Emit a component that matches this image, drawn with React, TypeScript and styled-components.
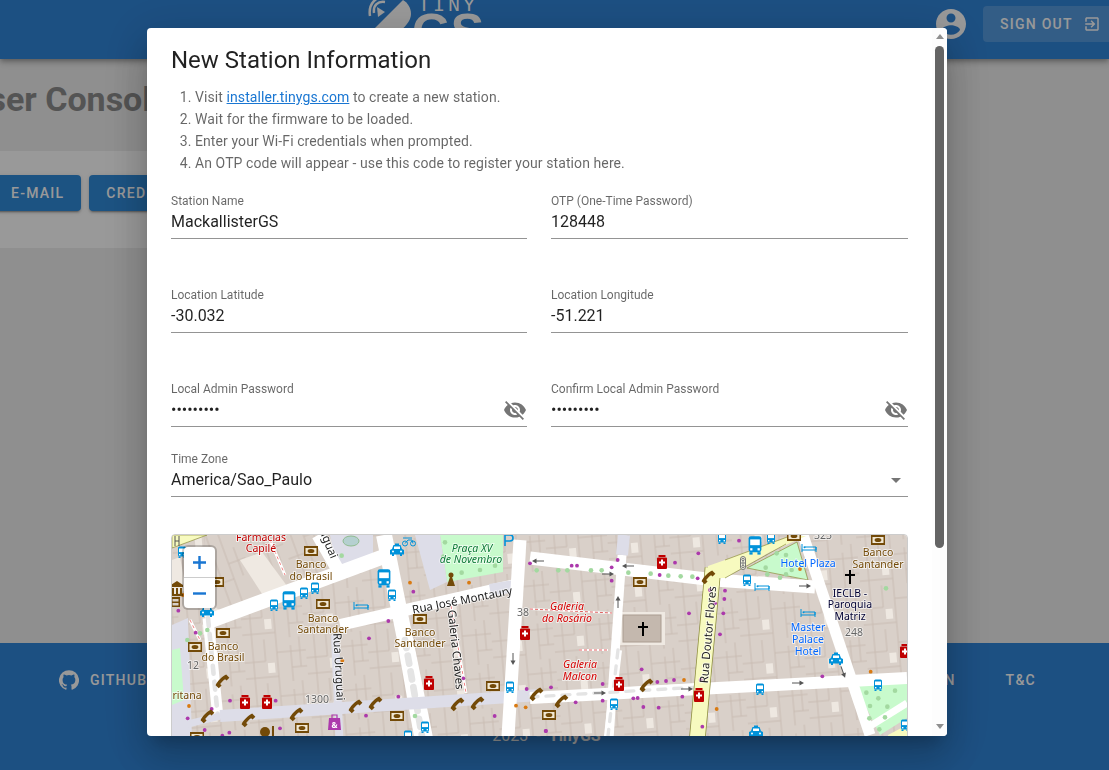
import React from "react";
import styled, { createGlobalStyle } from "styled-components";

const Global = createGlobalStyle`
  html, body { margin: 0; padding: 0; height: 100%; overflow: hidden; }
  body { font-family: Roboto, "Liberation Sans", sans-serif; background: #eeeeee; }
  * { box-sizing: border-box; }
`;

const Page = styled.div`
  width: 1109px; height: 770px; display: flex; flex-direction: column; overflow: hidden; background: #eeeeee;
`;
const Header = styled.header`
  height: 59px; flex: none; display: flex; align-items: flex-start; padding-left: 367px;
  background: #3085d9; overflow: hidden; box-shadow: 0 2px 4px -1px rgba(0,0,0,.2), 0 4px 5px rgba(0,0,0,.14), 0 1px 10px rgba(0,0,0,.12);
  position: relative;
`;
const Logo = styled.div`
  display: flex; gap: 4px; color: #fff; width: 113px; flex: none;
`;
const LogoWords = styled.div`
  display: flex; flex-direction: column; align-items: center; width: 64px; margin-top: -4px;
`;
const LogoTiny = styled.span`
  font-family: "Liberation Mono", monospace; font-size: 20px; line-height: 20px; letter-spacing: 3px; white-space: nowrap;
`;
const LogoGs = styled.span`
  font-family: "Liberation Sans", sans-serif; font-weight: 700; font-size: 50px; line-height: 44px; margin-top: -6px; white-space: nowrap;
`;
const Avatar = styled.svg`
  width: 36px; height: 36px; fill: #fff; margin: 6px 14px 0 453px; flex: none;
`;
const SignOut = styled.div`
  flex: none; width: 132px; height: 36px; margin-top: 6px; padding-left: 17px; display: flex; align-items: center; gap: 10px;
  background: rgba(255,255,255,.18); border-radius: 4px; color: #fff;
  font-size: 14px; font-weight: 500; letter-spacing: 1.25px;
  svg { width: 18px; height: 18px; fill: #fff; flex: none; }
`;
const Main = styled.main`
  flex: 1; min-height: 0; overflow: hidden;
`;
const Title = styled.h1`
  margin: 20px 0 0 -34px; font-size: 34px; line-height: 40px; font-weight: 700; color: #8c8c8c; white-space: nowrap;
`;
const Card = styled.div`
  margin: 32px 0 0 -6px; width: 500px; height: 97px; background: #fff; padding: 24px 0 0 0; display: flex; gap: 8px;
`;
const PageButton = styled.div`
  height: 36px; padding: 0 17px; display: flex; align-items: center; background: #2f8ad9; color: #fff; border-radius: 4px;
  font-size: 14px; font-weight: 500; letter-spacing: 1.25px;
  box-shadow: 0 3px 1px -2px rgba(0,0,0,.2), 0 2px 2px rgba(0,0,0,.14), 0 1px 5px rgba(0,0,0,.12);
`;
const Footer = styled.footer`
  height: 127px; flex: none; background: #3085d9; color: #fff; padding: 25px 73px 0 59px;
  display: flex; flex-direction: column;
`;
const FooterLinks = styled.div`
  display: flex; justify-content: space-between; height: 24px;
`;
const FooterGroup = styled.div`
  display: flex; gap: 50px; align-items: center;
`;
const FooterLink = styled.span`
  display: flex; align-items: center; gap: 11px; font-size: 14px; font-weight: 500; letter-spacing: 1.25px;
  svg { width: 20px; height: 20px; fill: #fff; }
`;
const Copy = styled.div`
  margin: 34px 0 0 -2px; display: flex; justify-content: center; gap: 8px; font-size: 16px; line-height: 20px;
  b { font-weight: 700; }
`;
const Overlay = styled.div`
  position: fixed; inset: 0; padding-right: 15px; background: rgba(0,0,0,.4); display: flex; justify-content: center; align-items: flex-start;
`;
const Dialog = styled.div`
  width: 800px; height: 708px; margin-top: 28px; background: #fff; border-radius: 4px; overflow: hidden; display: flex;
  box-shadow: 0 11px 15px -7px rgba(0,0,0,.2), 0 24px 38px 3px rgba(0,0,0,.14), 0 9px 46px 8px rgba(0,0,0,.12);
`;
const DialogBody = styled.div`
  flex: 1; min-width: 0; overflow: hidden; padding: 16px 24px 24px;
`;
const ScrollRail = styled.div`
  width: 15px; flex: none; background: #fdfdfd; display: flex; flex-direction: column; align-items: center; padding: 6px 0 7px 0;
`;
const RailArrow = styled.div<{ $down?: boolean }>`
  width: 0; height: 0; border-left: 4.5px solid transparent; border-right: 4.5px solid transparent; flex: none;
  ${(p) => (p.$down ? "border-top: 5px solid #8f8f8f; margin-top: auto;" : "border-bottom: 5px solid #8f8f8f;")}
`;
const RailThumb = styled.div`
  width: 9px; height: 502px; margin-top: 7px; background: #646464; border-radius: 4.5px; flex: none;
`;
const DialogTitle = styled.h2`
  margin: 0; font-size: 24px; line-height: 32px; font-weight: 400; color: rgba(0,0,0,.87);
`;
const Steps = styled.ol`
  margin: 10px 0 20px; padding: 0 0 0 24px; font-size: 14px; line-height: 22px; color: rgba(0,0,0,.6); letter-spacing: .09px;
  a { color: #1976d2; }
`;
const FieldGrid = styled.div`
  display: grid; grid-template-columns: 356px 357px; column-gap: 24px; row-gap: 49px;
`;
const Field = styled.div<{ $wide?: boolean }>`
  height: 45px; border-bottom: 1px solid rgba(0,0,0,.42); display: flex; flex-direction: column;
  ${(p) => (p.$wide ? "margin-top: 25px;" : "")}
`;
const FieldLabel = styled.label`
  font-size: 12px; line-height: 14px; color: rgba(0,0,0,.6); letter-spacing: 0;
`;
const FieldValue = styled.div`
  height: 25px; margin-top: 1px; display: flex; align-items: center; justify-content: space-between;
  font-size: 16px; color: rgba(0,0,0,.87); letter-spacing: 0;
  svg { width: 24px; height: 24px; fill: rgba(0,0,0,.54); flex: none; }
`;
const MapBox = styled.div`
  position: relative; margin-top: 37px; height: 420px; border: 1px solid #ccc; border-radius: 4px; overflow: hidden;
  svg.map { display: block; }
`;
const ZoomControl = styled.div`
  position: absolute; left: 12px; top: 12px; width: 31px; height: 61px; background: #fff; border-radius: 4px;
  box-shadow: 0 0 0 2px rgba(0,0,0,.2); display: flex; flex-direction: column;
`;
const ZoomButton = styled.div`
  flex: 1; display: flex; align-items: center; justify-content: center;
  & + & { border-top: 1px solid #ccc; }
  svg { width: 13px; height: 13px; fill: #1976d2; }
`;

const P = {
  eye: "M12 7c2.76 0 5 2.24 5 5 0 .65-.13 1.26-.36 1.83l2.92 2.92c1.51-1.26 2.7-2.89 3.43-4.75-1.73-4.39-6-7.5-11-7.5-1.4 0-2.74.25-3.98.7l2.16 2.16C10.74 7.13 11.35 7 12 7zM2 4.27l2.28 2.28.46.46C3.08 8.3 1.78 10.02 1 12c1.73 4.39 6 7.5 11 7.5 1.55 0 3.03-.3 4.38-.84l.42.42L19.73 22 21 20.73 3.27 3 2 4.27zM7.53 9.8l1.55 1.55c-.05.21-.08.43-.08.65 0 1.66 1.34 3 3 3 .22 0 .44-.03.65-.08l1.55 1.55c-.67.33-1.41.53-2.2.53-2.76 0-5-2.24-5-5 0-.79.2-1.53.53-2.2zm4.31-.78l3.15 3.15.02-.16c0-1.66-1.34-3-3-3l-.17.01z",
  account: "M12 2C6.48 2 2 6.48 2 12s4.48 10 10 10 10-4.48 10-10S17.52 2 12 2zm0 3c1.66 0 3 1.34 3 3s-1.34 3-3 3-3-1.34-3-3 1.34-3 3-3zm0 14.2c-2.5 0-4.71-1.28-6-3.22.03-1.99 4-3.08 6-3.08 1.99 0 5.97 1.09 6 3.08-1.29 1.94-3.5 3.22-6 3.22z",
  exit: "M10.09 15.59L11.5 17l5-5-5-5-1.41 1.41L12.67 11H3v2h9.67l-2.58 2.59zM19 3H5c-1.11 0-2 .9-2 2v4h2V5h14v14H5v-4H3v4c0 1.1.89 2 2 2h14c1.1 0 2-.9 2-2V5c0-1.1-.9-2-2-2z",
  github: "M12 .3a12 12 0 0 0-3.8 23.4c.6.1.8-.3.8-.6v-2c-3.3.7-4-1.6-4-1.6-.6-1.4-1.4-1.8-1.4-1.8-1-.7.1-.7.1-.7 1.2 0 1.9 1.2 1.9 1.2 1 1.8 2.8 1.3 3.5 1 0-.8.4-1.3.7-1.6-2.7-.3-5.5-1.3-5.5-6 0-1.2.5-2.3 1.3-3.1-.2-.4-.6-1.6 0-3.2 0 0 1-.3 3.4 1.2a11.5 11.5 0 0 1 6 0c2.3-1.5 3.3-1.2 3.3-1.2.6 1.6.2 2.8 0 3.2.9.8 1.3 1.9 1.3 3.2 0 4.6-2.8 5.6-5.5 5.9.5.4.9 1 .9 2.2v3.3c0 .3.1.7.8.6A12 12 0 0 0 12 .3",
};

type Pt = [number, number];
const lp = (a: Pt[]): Pt[] => a.map(([x, y]) => [160 + x / 3, 525 + y / 3]);
const rp = (a: Pt[]): Pt[] => a.map(([x, y]) => [530 + x / 3, 525 + y / 3]);

const banks: Pt[] = [[311,551],[217,582],[323,604],[223,633],[195,647],[420,619],[493,686],[397,716],[302,728],[197,737],[640,582],[878,540],[549,715],[794,536]];
const buses: Pt[] = [[182,552],[274,605],[304,593],[315,588],[392,595],[510,687],[425,727],[408,736],[722,538],[771,538],[747,580],[614,704],[760,689],[878,685],[905,725]];
const bigBuses: Pt[] = [[289,600],[384,578],[755,545]];
const taxis: Pt[] = [[397,550],[207,611],[836,659],[756,732]];
const pharmacies: Pt[] = [[245,702],[267,702],[429,683],[525,633],[662,562],[619,684],[699,695],[905,651]];
const phones: Pt[] = [[223,682],[208,717],[249,721],[297,715],[356,707],[376,704],[458,705],[478,704],[537,695],[562,702],[647,686],[709,578]];
const beds: Pt[] = [[361,606],[809,548],[762,587],[808,613]];
const crosses: Pt[] = [[643,629],[850,577]];
const purple: Pt[] = [
  ...lp([[55,257],[107,323],[210,527],[155,552],[347,527],[83,580],[208,623],[360,610],[134,615],[187,632],[627,340],[760,200],[685,288],[715,515],[910,460],[1110,115],[1100,492],[1004,573],[618,572]]),
  ...rp([[505,85],[627,47],[263,105],[435,113],[125,122],[141,122],[245,127],[245,167],[389,150],[503,160],[540,195],[585,197],[583,222],[555,235],[580,265],[477,265],[570,328],[335,433],[63,487],[218,477],[382,471],[408,468],[432,465],[512,465],[137,532],[218,527],[310,520],[323,519],[340,546],[386,548],[457,515],[47,618],[517,605],[877,454]]),
  [546,731],
];
const orange: Pt[] = [
  ...lp([[547,407],[87,543],[1068,542],[1097,547],[750,173],[927,173],[68,210]]),
  ...rp([[810,132],[462,465],[560,552],[1022,440]]),
];
const green: Pt[] = [
  ...rp([[20,136],[85,136],[112,136],[183,136],[215,136],[295,143],[362,146],[415,152],[452,154],[487,155],[707,128],[750,158],[768,148],[785,135],[712,148],[740,85],[768,90],[1068,190],[1009,503],[1045,520],[1095,497],[1020,543],[1072,545],[1018,580],[1065,577],[1048,613]]),
  ...lp([[120,325],[142,315],[82,345],[545,92],[765,573],[855,52],[850,95],[905,143],[960,135],[1005,122],[915,75]]),
];
const arrows: [number, number, number][] = [[538,561,180],[628,566,180],[608,574,0],[618,602,-90],[513,659,90],[600,693,0],[687,689,0],[798,683,0],[805,586,0],[843,672,70]];

type Label = { x: number; y: number; t: string; c: string; i?: boolean; s?: number; r?: number };
const BR = "#734a08";
const labels: Label[] = [
  { x: 261, y: 541, t: "Farmácias", c: "#c00000" }, { x: 261, y: 552, t: "Capilé", c: "#c00000" },
  { x: 311, y: 568, t: "Banco", c: BR }, { x: 311, y: 580, t: "do Brasil", c: BR },
  { x: 323, y: 622, t: "Banco", c: BR }, { x: 323, y: 633, t: "Santander", c: BR },
  { x: 223, y: 650, t: "Banco", c: BR }, { x: 223, y: 661, t: "do Brasil", c: BR },
  { x: 420, y: 636, t: "Banco", c: BR }, { x: 420, y: 647, t: "Santander", c: BR },
  { x: 878, y: 556, t: "Banco", c: BR }, { x: 878, y: 568, t: "Santander", c: BR },
  { x: 472, y: 552, t: "Praça XV", c: "#0c7a36", i: true }, { x: 471, y: 563, t: "de Novembro", c: "#0c7a36", i: true },
  { x: 567, y: 610, t: "Galeria", c: "#d40000", i: true }, { x: 567, y: 622, t: "do Rosário", c: "#d40000", i: true },
  { x: 580, y: 668, t: "Galeria", c: "#d40000", i: true }, { x: 580, y: 680, t: "Malcon", c: "#d40000", i: true },
  { x: 808, y: 567, t: "Hotel Plaza", c: "#0066ff" },
  { x: 808, y: 631, t: "Master", c: "#0066ff" }, { x: 808, y: 643, t: "Palace", c: "#0066ff" }, { x: 808, y: 655, t: "Hotel", c: "#0066ff" },
  { x: 850, y: 597, t: "IECLB -", c: "#000033" }, { x: 850, y: 608, t: "Paroquia", c: "#000033" }, { x: 850, y: 620, t: "Matriz", c: "#000033" },
  { x: 854, y: 636, t: "248", c: "#666" }, { x: 823, y: 539, t: "323", c: "#666" }, { x: 523, y: 616, t: "38", c: "#666" },
  { x: 193, y: 669, t: "12", c: "#666" }, { x: 317, y: 703, t: "1300", c: "#666" }, { x: 187, y: 699, t: "ritana", c: BR },
  { x: 463, y: 604, t: "Rua José Montaury", c: "#222", s: 11.5, r: -11 },
  { x: 335, y: 667, t: "Rua Uruguai", c: "#222", s: 11.5, r: 87 },
  { x: 452, y: 650, t: "Galeria Chaves", c: "#222", s: 11.5, r: 84 },
  { x: 325, y: 545, t: "uguai", c: "#222", s: 11.5, r: 68 },
  { x: 712, y: 635, t: "Rua Doutor Flores", c: "#222", s: 11.5, r: -85 },
];

const Bank = ({ x, y }: { x: number; y: number }) => (
  <g transform={`translate(${x - 7},${y - 5})`}>
    <rect width="14" height="10" fill="#734a08" />
    <rect x="1.5" y="2" width="11" height="6" fill="#f1e7d2" />
    <ellipse cx="7" cy="5" rx="3.4" ry="2" fill="#734a08" />
  </g>
);
const Bus = ({ x, y, big }: { x: number; y: number; big?: boolean }) => (
  <g transform={`translate(${x},${y}) scale(${big ? 1.6 : 1})`}>
    <rect x="-4" y="-5.5" width="8" height="10" rx="1.5" fill="#0092da" />
    <rect x="-3" y="-3.5" width="6" height="3.6" fill="#fff" />
    <rect x="-3" y="2" width="1.4" height="1.4" fill="#fff" />
    <rect x="1.6" y="2" width="1.4" height="1.4" fill="#fff" />
    <rect x="-3.5" y="4.5" width="2" height="1.5" fill="#0092da" />
    <rect x="1.5" y="4.5" width="2" height="1.5" fill="#0092da" />
  </g>
);
const Taxi = ({ x, y }: { x: number; y: number }) => (
  <g transform={`translate(${x},${y})`}>
    <path d="M-2-6.5h4v1.5h1.5L5-1l2 1v4.5H5V6H3V4.5h-6V6h-2V4.5h-2V0l2-1 1.500-4H-2z" fill="#0092da" />
    <rect x="-3" y="-3.5" width="6" height="2.5" fill="#fff" />
    <circle cx="-4" cy="1.500" r="1" fill="#fff" /><circle cx="4" cy="1.500" r="1" fill="#fff" />
  </g>
);
const Pharmacy = ({ x, y }: { x: number; y: number }) => (
  <g transform={`translate(${x},${y})`}>
    <rect x="-3.5" y="-7" width="7" height="2" fill="#bf0000" />
    <rect x="-5" y="-4.500" width="10" height="11.500" rx="1" fill="#bf0000" />
    <path d="M-1-2.500h2v2h2v2H1v2h-2v-2h-2v-2h2z" fill="#fff" />
  </g>
);
const Phone = ({ x, y }: { x: number; y: number }) => (
  <g transform={`translate(${x},${y}) rotate(-45)`}>
    <path d="M-7.500-3C-4-4.500 4-4.500 7.500-3V1.500H3.500V-.500C2-1-2-1-3.500-.500V1.500H-7.500z" fill="#734a08" />
  </g>
);
const Bed = ({ x, y }: { x: number; y: number }) => (
  <g transform={`translate(${x},${y})`} stroke="#0092da" fill="none" strokeWidth="1">
    <path d="M-7-4V4M7-1V4M-7 2H7V-1H-4" />
    <circle cx="-4.500" cy="-.800" r="1" fill="#0092da" stroke="none" />
  </g>
);
const Cross = ({ x, y }: { x: number; y: number }) => (
  <path d={`M${x - 1} ${y - 7}h2v4h4v2h-4v8h-2v-8h-4v-2h4z`} fill="#000" />
);
const Arrow = ({ x, y, a }: { x: number; y: number; a: number }) => (
  <g transform={`translate(${x},${y}) rotate(${a})`}>
    <path d="M-6 0H3" stroke="#555" strokeWidth="1" />
    <path d="M1.500-2.500 6 0 1.500 2.500z" fill="#555" />
  </g>
);

const Road = ({ d, w = 12, c = "#fff", dash, edge }: { d: string; w?: number; c?: string; dash?: boolean; edge?: string }) => (
  <>
    {edge && <path d={d} fill="none" stroke={edge} strokeWidth={w + 1.5} />}
    <path d={d} fill="none" stroke={c} strokeWidth={w} />
    {dash && <path d={d} fill="none" stroke="#e4e4e4" strokeWidth={w * 0.42} strokeLinecap="round" strokeDasharray="8 8" />}
  </>
);

const MapDrawing = () => (
  <svg className="map" width="735" height="418" viewBox="172 535 735 418" xmlns="http://www.w3.org/2000/svg">
    <defs>
      <pattern id="parcels" width="62" height="44" patternUnits="userSpaceOnUse" patternTransform="rotate(-5)">
        <rect width="62" height="44" fill="#d9d0c9" />
        <path d="M9 0V44M21 0V22M33 0V44M47 8V44M56 0V30M0 22H21M33 14H62M0 38H33M47 30H62" fill="none" stroke="#c9bdb3" strokeWidth="1" />
        <rect x="23" y="24" width="7" height="10" fill="#eee8e1" />
      </pattern>
      <pattern id="parcelsTilted" width="40" height="54" patternUnits="userSpaceOnUse" patternTransform="rotate(-20)">
        <rect width="40" height="54" fill="#d9d0c9" />
        <path d="M10 0V54M22 0V54M32 0V30M0 30H22M22 14H40" fill="none" stroke="#c9bdb3" strokeWidth="1" />
      </pattern>
    </defs>
    <rect x="172" y="535" width="735" height="418" fill="url(#parcels)" />
    <path d="M205 535 318 535 340 575 218 625 200 600z" fill="url(#parcelsTilted)" />
    <path d="M240 560 262 552 290 590 266 600z" fill="#efe9e2" />
    <path d="M200 600 218 620 300 590 296 584 220 610z" fill="#efe9e2" />
    <path d="M172 535H207L172 548z" fill="#f7fabf" stroke="#8c8c3c" strokeWidth=".7" />
    <path d="M172 625 188 618 192 738H172z" fill="#dddde8" />
    <path d="M172 650 180 648 184 700 172 705z" fill="#c8facc" />
    <path d="M330 535H373V558L345 567 335 560z" fill="#dddde8" />
    <ellipse cx="351" cy="541" rx="8" ry="5" fill="#b5d0d0" stroke="#8fbc8f" />
    <path d="M440 535H503V572L447 582z" fill="#c8facc" />
    <path d="M415 535H440L447 582 430 590z" fill="#dddde8" />
    <path d="M747 568 797 542 808 580z" fill="#c8facc" stroke="#8c8c3c" strokeWidth=".7" />
    <path d="M855 685 907 680V718L880 735z" fill="#c8facc" />
    <rect x="620" y="612" width="45" height="33" fill="#efe9e2" />
    <rect x="623" y="615" width="38" height="27" fill="#c4b8ae" stroke="#aa9c90" />
    <path d="M172 560 180 557 186 590 172 596z" fill="#efe9e2" />
    <path d="M530 609 612 613M579 650H608" stroke="#fff" strokeWidth="2" fill="none" />
    <path d="M530 609 612 613M579 650H608" stroke="#e06060" strokeWidth="1" strokeDasharray="3 2" fill="none" />
    <path d="M270 540 285 575M450 600 466 693M190 620 200 640" stroke="#fff" strokeWidth="3" fill="none" />
    <path d="M270 540 285 575M450 600 466 693M190 620 200 640" stroke="#f08080" strokeWidth="1" strokeDasharray="3 3" fill="none" />

    <Road d="M207 622 388 555" w={15} />
    <Road d="M340 625 515 585" w={12} />
    <Road d="M490 590 520 585" w={12} c="#dddde8" />
    <Road d="M335 635 340 753" w={8} c="#dddde8" />
    <Road d="M318 535 342 577" w={13} />
    <Road d="M384 535 428 753" w={16} />
    <Road d="M405 640 425 753" w={16} dash />
    <Road d="M208 618 218 718" w={11} dash />
    <Road d="M220 716 540 695" w={12} c="#dddde8" />
    <Road d="M172 728 220 716" w={7} c="#dddde8" />
    <Road d="M520 540 507 753" w={13} />
    <Road d="M530 558 715 580 815 587" w={13} />
    <Road d="M622 555 608 753" w={9} />
    <Road d="M624 535 622 555" w={12} c="#dddde8" />
    <Road d="M618 650 606 753" w={8} dash />
    <Road d="M530 698 907 678" w={12} />
    <Road d="M530 697 700 687" w={8} dash />
    <Road d="M803 535 870 735" w={11} />
    <Road d="M713 568 696 753" w={15} c="#f7fabf" edge="#8c8c3c" />
    <path d="M708 566 725 560 790 536H806L770 552 725 578 708 578z" fill="#f7fabf" />
    <path d="M725 560 790 536M725 578 786 544" stroke="#8c8c3c" strokeWidth=".7" fill="none" />
    <path d="M864 730 907 703" stroke="#fff" strokeWidth="7" fill="none" />
    <path d="M888 735 907 725V740H888z" fill="#f7fabf" />

    {green.map(([x, y], i) => <circle key={`g${i}`} cx={x} cy={y} r="2.300" fill="#a3d9a0" />)}
    {purple.map(([x, y], i) => <circle key={`p${i}`} cx={x} cy={y} r="1.900" fill="#ac39ac" />)}
    {orange.map(([x, y], i) => <circle key={`o${i}`} cx={x} cy={y} r="1.900" fill="#d97a12" />)}
    {arrows.map(([x, y, a], i) => <Arrow key={`a${i}`} x={x} y={y} a={a} />)}

    {labels.map((l, i) => (
      <text key={`t${i}`} x={l.x} y={l.y} textAnchor="middle" fill={l.c} fontFamily='"Noto Sans", sans-serif' fontStyle={l.i ? "italic" : "normal"} fontSize={l.s ?? 10.500}
        stroke="rgba(255,255,255,.65)" strokeWidth="1.800" paintOrder="stroke" transform={l.r ? `rotate(${l.r} ${l.x} ${l.y})` : undefined}>
        {l.t}
      </text>
    ))}

    {banks.map(([x, y], i) => <Bank key={`b${i}`} x={x} y={y} />)}
    {buses.map(([x, y], i) => <Bus key={`u${i}`} x={x} y={y} />)}
    {bigBuses.map(([x, y], i) => <Bus key={`v${i}`} x={x} y={y} big />)}
    {taxis.map(([x, y], i) => <Taxi key={`x${i}`} x={x} y={y} />)}
    {pharmacies.map(([x, y], i) => <Pharmacy key={`h${i}`} x={x} y={y} />)}
    {phones.map(([x, y], i) => <Phone key={`f${i}`} x={x} y={y} />)}
    {beds.map(([x, y], i) => <Bed key={`d${i}`} x={x} y={y} />)}
    {crosses.map(([x, y], i) => <Cross key={`c${i}`} x={x} y={y} />)}

    <g fill="#734a08">
      <path d="M171 585 177 581 183 585V587H171zM172 588h2v6h-2zM176 588h2v6h-2zM180 588h2v6h-2zM171 594h12v2H171z" />
      <path d="M171 597h9v10h-9zM172.500 599v2.500h6v-2.500zM172.500 603v2.500h6v-2.500z" />
      <path d="M447 586 451 574l4 12z" />
      <circle cx="451" cy="575" r="2.500" />
      <circle cx="265" cy="732" r="5" />
      <rect x="272" y="726" width="2" height="14" />
    </g>
    <g fill="#ac39ac">
      <path d="M329 718h11l1 12h-13z" />
      <path d="M332 718v-3h5v3" fill="none" stroke="#ac39ac" strokeWidth="1.200" />
    </g>
    <text x="334.500" y="728" textAnchor="middle" fontFamily='"Noto Sans", sans-serif' fontWeight="700" fontSize="8" fill="#fff">&amp;</text>
    <path d="M505 535V546M505 535H510A3 3 0 0 1 510 541H505" fill="none" stroke="#0092da" strokeWidth="1.600" />
    <g transform="translate(743 563)" fill="none" stroke="#777" strokeWidth="1">
      <rect x="-2.500" y="-6.500" width="5" height="13" rx="2.500" fill="#f4f4e0" />
      <circle cy="-3.500" r="1.200" /><circle r="1.200" /><circle cy="3.500" r="1.200" />
    </g>
    <g transform="translate(409 542)" fill="none" stroke="#0092da" strokeWidth="1">
      <circle cx="-4" cy="1.500" r="2.500" /><circle cx="4" cy="1.500" r="2.500" />
      <path d="M-4 1.500-1-2H3L4 1.500M-6-4H3" />
    </g>
    <g transform="translate(177 541)" fill="none" stroke="#555" strokeWidth="1">
      <path d="M-2-5V5M2-5V5M-2 0H2" />
    </g>
  </svg>
);

const PasswordField = ({ label }: { label: string }) => (
  <Field>
    <FieldLabel>{label}</FieldLabel>
    <FieldValue>
      <span>•••••••••</span>
      <svg viewBox="0 0 24 24"><path d={P.eye} /></svg>
    </FieldValue>
  </Field>
);
const TextField = ({ label, value }: { label: string; value: string }) => (
  <Field>
    <FieldLabel>{label}</FieldLabel>
    <FieldValue>{value}</FieldValue>
  </Field>
);

export default function App() {
  return (
    <>
      <Global />
      <Page>
        <Header>
          <Logo>
            <svg width="45" height="30" viewBox="0 0 45 30" fill="#fff" style={{ flex: "none" }}>
              <path d="M6 30 36 0C41 3 44 8 44 14 44 20 39 26 34 30z" />
              <path d="M10 7 18 12 11 17z" />
              <path d="M17 0C10 -1 5 3 6 11M21-6C8-7 0 2 2 14" fill="none" stroke="#fff" strokeWidth="2.500" transform="translate(1 2)" />
            </svg>
            <LogoWords>
              <LogoTiny>TINY</LogoTiny>
              <LogoGs>GS</LogoGs>
            </LogoWords>
          </Logo>
          <Avatar viewBox="0 0 24 24"><path d={P.account} /></Avatar>
          <SignOut>
            SIGN OUT
            <svg viewBox="0 0 24 24"><path d={P.exit} /></svg>
          </SignOut>
        </Header>
        <Main>
          <Title>User Console</Title>
          <Card>
            <PageButton>E-MAIL</PageButton>
            <PageButton>CREDENTIALS</PageButton>
          </Card>
        </Main>
        <Footer>
          <FooterLinks>
            <FooterGroup>
              <FooterLink>
                <svg viewBox="0 0 24 24"><path d={P.github} /></svg>
                GITHUB
              </FooterLink>
            </FooterGroup>
            <FooterGroup>
              <FooterLink>DOCUMENTATION</FooterLink>
              <FooterLink>T&amp;C</FooterLink>
            </FooterGroup>
          </FooterLinks>
          <Copy>
            <span>2023</span><span>-</span><b>TinyGS</b>
          </Copy>
        </Footer>
        <Overlay>
          <Dialog>
            <DialogBody>
              <DialogTitle>New Station Information</DialogTitle>
              <Steps>
                <li>Visit <a href="#installer">installer.tinygs.com</a> to create a new station.</li>
                <li>Wait for the firmware to be loaded.</li>
                <li>Enter your Wi-Fi credentials when prompted.</li>
                <li>An OTP code will appear - use this code to register your station here.</li>
              </Steps>
              <FieldGrid>
                <TextField label="Station Name" value="MackallisterGS" />
                <TextField label="OTP (One-Time Password)" value="128448" />
                <TextField label="Location Latitude" value="-30.032" />
                <TextField label="Location Longitude" value="-51.221" />
                <PasswordField label="Local Admin Password" />
                <PasswordField label="Confirm Local Admin Password" />
              </FieldGrid>
              <Field $wide>
                <FieldLabel>Time Zone</FieldLabel>
                <FieldValue>
                  America/Sao_Paulo
                  <svg viewBox="0 0 24 24"><path d="M7 10l5 5 5-5z" /></svg>
                </FieldValue>
              </Field>
              <MapBox>
                <MapDrawing />
                <ZoomControl>
                  <ZoomButton><svg viewBox="0 0 14 14"><path d="M5.700 0h2.600v5.700H14v2.600H8.300V14H5.700V8.300H0V5.700h5.700z" /></svg></ZoomButton>
                  <ZoomButton><svg viewBox="0 0 14 14"><rect y="5.700" width="14" height="2.600" /></svg></ZoomButton>
                </ZoomControl>
              </MapBox>
            </DialogBody>
            <ScrollRail>
              <RailArrow />
              <RailThumb />
              <RailArrow $down />
            </ScrollRail>
          </Dialog>
        </Overlay>
      </Page>
    </>
  );
}
